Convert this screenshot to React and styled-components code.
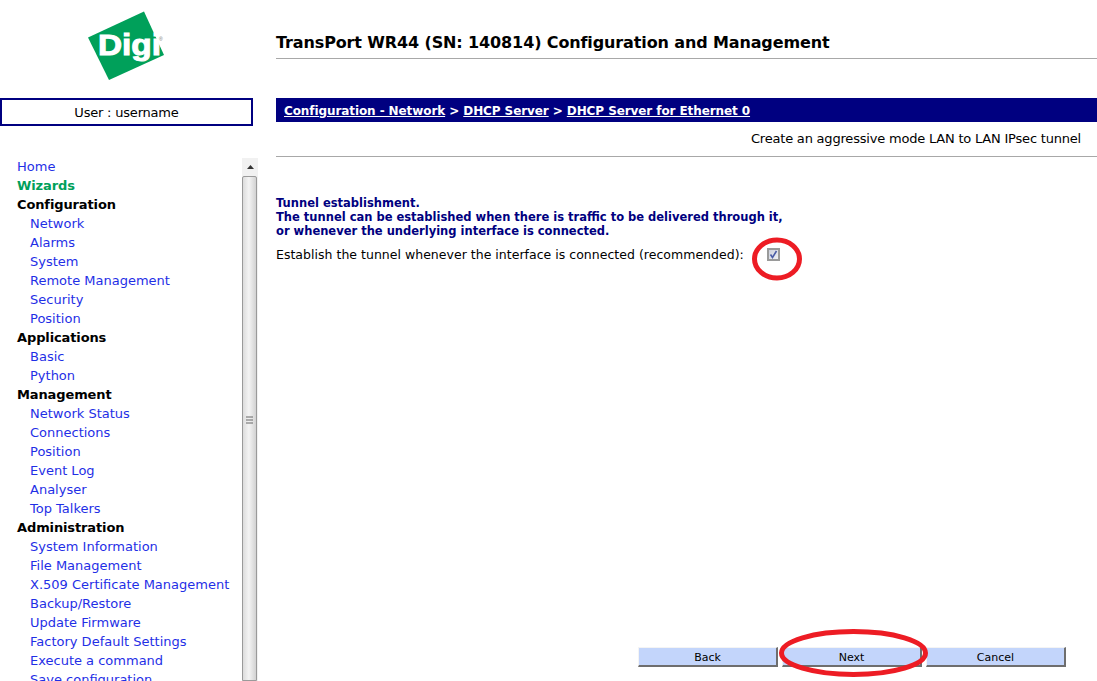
import React from "react";
import styled, { createGlobalStyle } from "styled-components";

const Global = createGlobalStyle`
  html, body { margin: 0; padding: 0; background: #fff; overflow: hidden; }
  body { font-family: "DejaVu Sans", Verdana, sans-serif; font-size: 13px; color: #000; }
`;

const Page = styled.div`
  position: relative;
  display: flex;
  width: 1097px;
  height: 681px;
  overflow: hidden;
`;

const Sidebar = styled.aside`
  display: flex;
  flex-direction: column;
  width: 258px;
  flex: none;
  height: 681px;
`;

const LogoArea = styled.div`
  height: 98px;
  flex: none;
`;

const UserBox = styled.div`
  box-sizing: border-box;
  width: 253px;
  height: 28px;
  border: 2px solid #000080;
  display: flex;
  align-items: center;
  justify-content: center;
  font-size: 13px;
  letter-spacing: -0.2px;
`;

const MenuFrame = styled.div`
  display: flex;
  flex: 1;
  min-height: 0;
  margin-top: 31px;
`;

const MenuList = styled.nav`
  flex: 1;
  overflow: hidden;
  padding: 0 0 0 17px;
`;

const MenuRow = styled.div`
  height: 19px;
  line-height: 19px;
  white-space: nowrap;
  font-size: 13px;
  padding-left: ${(p) => (p.$sub ? "13px" : "0")};
  font-weight: ${(p) => (p.$head || p.$green ? "bold" : "normal")};
  letter-spacing: ${(p) => (p.$head || p.$green ? "-0.12px" : "0")};
  color: ${(p) => (p.$green ? "#00a05a" : p.$head ? "#000" : "#1f2fe6")};
`;

const Scrollbar = styled.div`
  width: 16px;
  flex: none;
  margin-top: 1px;
  display: flex;
  flex-direction: column;
  background: #f1f1f1;
`;

const ScrollUp = styled.div`
  height: 18px;
  flex: none;
  display: flex;
  align-items: center;
  justify-content: center;
  background: #f1f1f1;
`;

const Thumb = styled.div`
  box-sizing: border-box;
  flex: 1;
  margin: 0 1px 0 0;
  padding-bottom: 17px;
  border: 1px solid #9a9a9a;
  border-radius: 2px 2px 0 0;
  background: linear-gradient(90deg, #dcdcdc, #f4f4f4 45%, #d2d2d2);
  display: flex;
  align-items: center;
  justify-content: center;
`;

const Main = styled.main`
  flex: 1;
  min-width: 0;
  margin-left: 18px;
  display: flex;
  flex-direction: column;
  height: 681px;
`;

const Title = styled.h1`
  margin: 0;
  box-sizing: border-box;
  height: 59px;
  padding-top: 33px;
  border-bottom: 1px solid #a8a8a8;
  font-size: 16px;
  letter-spacing: -0.125px;
  line-height: 19px;
  font-weight: bold;
  white-space: nowrap;
`;

const Crumbs = styled.div`
  margin-top: 39px;
  height: 24px;
  background: #000080;
  color: #fff;
  font-size: 12px;
  letter-spacing: -0.09px;
  font-weight: bold;
  line-height: 26px;
  padding-left: 8px;
  white-space: nowrap;
`;

const CrumbLink = styled.span`
  text-decoration: underline;
`;

const SubTitle = styled.div`
  box-sizing: border-box;
  height: 35px;
  border-bottom: 1px solid #a8a8a8;
  text-align: right;
  padding: 9px 16px 0 0;
  line-height: 16px;
  font-size: 13px;
  letter-spacing: -0.2px;
`;

const Intro = styled.p`
  margin: 39px 0 0;
  font-size: 11.5px;
  line-height: 14px;
  font-weight: bold;
  color: #000080;
`;

const OptionRow = styled.label`
  display: flex;
  align-items: center;
  margin-top: 6px;
  height: 20px;
  font-size: 12.5px;
  letter-spacing: 0.02px;
`;

const Check = styled.span`
  box-sizing: border-box;
  width: 13px;
  height: 13px;
  margin: 1px 0 0 23px;
  border: 2px solid #9a9a9a;
  background: linear-gradient(135deg, #ccd0dc, #eef0f5);
  display: flex;
  align-items: center;
  justify-content: center;
`;

const Buttons = styled.div`
  margin-top: auto;
  display: flex;
  justify-content: flex-end;
  gap: 4px;
  padding: 0 31px 14px 0;
`;

const Btn = styled.button`
  box-sizing: border-box;
  width: 140px;
  height: 20px;
  padding: 1px 0 0;
  background: #c3d5fb;
  border-style: solid;
  border-width: 1px 2px 2px 1px;
  border-color: #f4f4f4 #6e6e6e #6e6e6e #f4f4f4;
  font-family: inherit;
  font-size: 11px;
  color: #000;
`;

const Oval = styled.svg`
  position: absolute;
  left: ${(p) => p.$x}px;
  top: ${(p) => p.$y}px;
  pointer-events: none;
  overflow: visible;
`;

const menu = [
  ["Home"], ["Wizards", "g"], ["Configuration", "h"],
  ["Network", "s"], ["Alarms", "s"], ["System", "s"], ["Remote Management", "s"], ["Security", "s"], ["Position", "s"],
  ["Applications", "h"], ["Basic", "s"], ["Python", "s"],
  ["Management", "h"], ["Network Status", "s"], ["Connections", "s"], ["Position", "s"], ["Event Log", "s"], ["Analyser", "s"], ["Top Talkers", "s"],
  ["Administration", "h"], ["System Information", "s"], ["File Management", "s"], ["X.509 Certificate Management", "s"], ["Backup/Restore", "s"], ["Update Firmware", "s"], ["Factory Default Settings", "s"], ["Execute a command", "s"], ["Save configuration", "s"],
];

const DigiLogo = () => (
  <svg width="258" height="98" viewBox="0 0 258 98" role="img" aria-label="Digi">
    <polygon points="144,11.5 88,37.5 109,80 164,55" fill="#00a05a" />
    <text x="98" y="55" fill="#fff" stroke="#fff" strokeWidth="1" fontFamily="'Liberation Sans', Arial, sans-serif" fontWeight="bold" fontSize="29" textLength="63" lengthAdjust="spacingAndGlyphs">Digi</text>
    <text x="159" y="41" fill="#777" fontFamily="'Liberation Sans', Arial, sans-serif" fontSize="5">®</text>
  </svg>
);

export default function App() {
  return (
    <Page>
      <Global />
      <Sidebar>
        <LogoArea><DigiLogo /></LogoArea>
        <UserBox>User : username</UserBox>
        <MenuFrame>
          <MenuList>
            {menu.map(([t, k], i) => (
              <MenuRow key={i} $sub={k === "s"} $head={k === "h"} $green={k === "g"}>{t}</MenuRow>
            ))}
          </MenuList>
          <Scrollbar>
            <ScrollUp>
              <svg width="7" height="4" viewBox="0 0 7 4"><polygon points="3.5,0 7,4 0,4" fill="#333" /></svg>
            </ScrollUp>
            <Thumb>
              <svg width="7" height="8" viewBox="0 0 7 8">
                <path d="M0 1h7M0 4h7M0 7h7" stroke="#666" strokeWidth="1" />
              </svg>
            </Thumb>
          </Scrollbar>
        </MenuFrame>
      </Sidebar>
      <Main>
        <Title>TransPort WR44 (SN: 140814) Configuration and Management</Title>
        <Crumbs>
          <CrumbLink>Configuration - Network</CrumbLink> &gt; <CrumbLink>DHCP Server</CrumbLink> &gt; <CrumbLink>DHCP Server for Ethernet 0</CrumbLink>
        </Crumbs>
        <SubTitle>Create an aggressive mode LAN to LAN IPsec tunnel</SubTitle>
        <Intro>
          Tunnel establishment.<br />
          The tunnel can be established when there is traffic to be delivered through it,<br />
          or whenever the underlying interface is connected.
        </Intro>
        <OptionRow>
          Establish the tunnel whenever the interface is connected (recommended):
          <Check>
            <svg width="9" height="9" viewBox="0 0 9 9"><path d="M1.5 4.5 L3.5 7.5 L7.5 1" fill="none" stroke="#4a5ca6" strokeWidth="1.6" /></svg>
          </Check>
        </OptionRow>
        <Buttons>
          <Btn>Back</Btn>
          <Btn>Next</Btn>
          <Btn>Cancel</Btn>
        </Buttons>
      </Main>
      <Oval $x={752} $y={237} width="50" height="44" viewBox="0 0 50 44">
        <ellipse cx="25" cy="22" rx="22.5" ry="19" fill="none" stroke="#ed1c24" strokeWidth="5" />
      </Oval>
      <Oval $x={779} $y={629} width="149" height="48" viewBox="0 0 149 48">
        <ellipse cx="74.5" cy="24" rx="72" ry="21.5" fill="none" stroke="#ed1c24" strokeWidth="5" />
      </Oval>
    </Page>
  );
}
